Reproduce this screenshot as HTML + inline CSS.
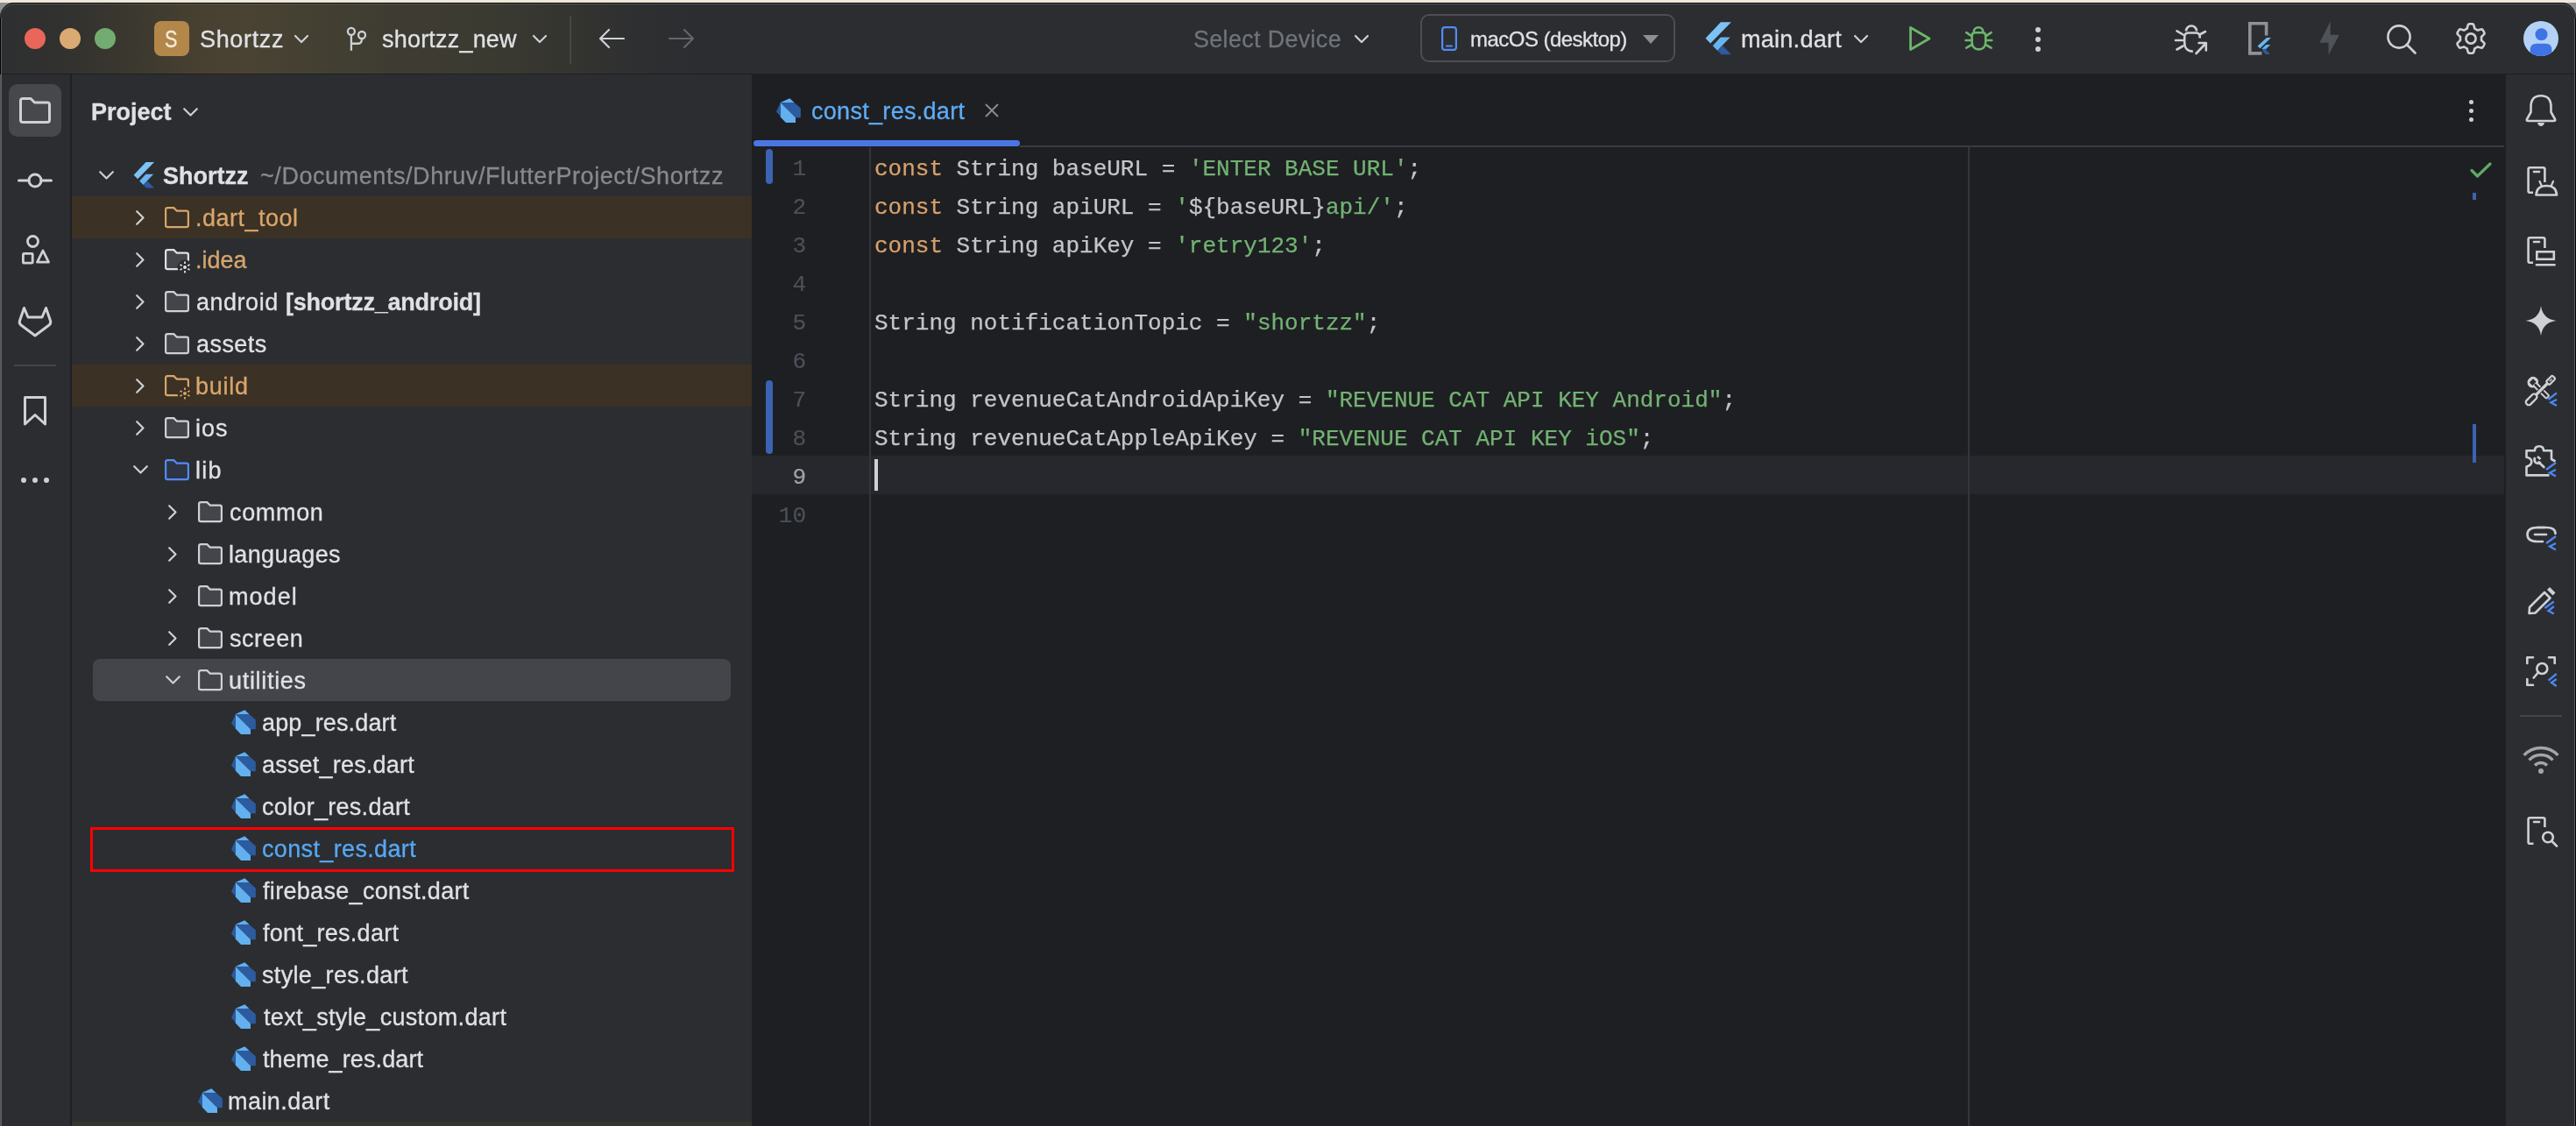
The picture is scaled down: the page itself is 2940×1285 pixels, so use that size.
<!DOCTYPE html>
<html><head><meta charset="utf-8">
<style>
html,body{margin:0;padding:0;}
body{width:2940px;height:1285px;overflow:hidden;background:#2b2d30;position:relative;font-family:"Liberation Sans",sans-serif;}
.a{position:absolute;}
.t{position:absolute;white-space:nowrap;font-size:27px;color:#dfe1e5;line-height:27px;height:27px;-webkit-text-stroke:0.3px currentColor;will-change:transform;}
.b{font-weight:bold;}
.m{position:absolute;white-space:pre;font-family:"Liberation Mono",monospace;font-size:26px;line-height:44px;height:44px;color:#c3c5cb;-webkit-text-stroke:0.25px currentColor;will-change:transform;}
svg{position:absolute;overflow:visible;}
.k{color:#d6a06b}.s{color:#72b273}
.ln{position:absolute;font-family:"Liberation Mono",monospace;font-size:26px;line-height:44px;color:#4b5059;text-align:right;width:80px;-webkit-text-stroke:0.2px currentColor;will-change:transform;}
</style></head><body>
<div class="a" style="left:0px;top:0px;width:2940px;height:3px;background:#efe8d8;"></div>
<div class="a" style="left:0px;top:3px;width:30px;height:30px;background:#8e8f90;"></div>
<div class="a" style="left:2910px;top:3px;width:30px;height:30px;background:#8e8f90;"></div>
<div class="a" style="left:0;top:3px;width:2940px;height:82px;border-radius:17px 17px 0 0;background:linear-gradient(90deg,#2e2f31 0px,#31312f 70px,#3b382f 150px,#474031 220px,#4a4333 280px,#444032 350px,#3e3c32 450px,#3b3a31 560px,#343430 650px,#2e2f31 730px,#2b2d30 800px);box-shadow:inset 0 1px 0 #000, inset 0 2px 0 #5a5b5c"></div>
<div class="a" style="left:0px;top:84px;width:2940px;height:1px;background:#1e1f22;"></div>
<div class="a" style="left:0px;top:20px;width:1px;height:65px;background:#000;"></div>
<div class="a" style="left:1px;top:20px;width:1px;height:65px;background:#5b5e5f;"></div>
<div class="a" style="left:2939px;top:20px;width:1px;height:65px;background:#000;"></div>
<div class="a" style="left:2938px;top:20px;width:1px;height:65px;background:#5b5e5f;"></div>
<div class="a" style="left:28px;top:32px;width:24px;height:24px;border-radius:50%;background:#e9665a"></div>
<div class="a" style="left:68px;top:32px;width:24px;height:24px;border-radius:50%;background:#dbaa72"></div>
<div class="a" style="left:108px;top:32px;width:24px;height:24px;border-radius:50%;background:#73ac70"></div>
<div class="a" style="left:176px;top:24px;width:40px;height:40px;border-radius:8px;background:#b3874a"></div>
<div class="t" style="left:188.2px;top:32.34px;font-size:27px;line-height:27px;height:27px;color:#f6eedf;transform:scaleX(0.8);transform-origin:0 0;">S</div>
<div class="t" style="left:228px;top:32.14px;font-size:27px;line-height:27px;height:27px;color:#dfe1e5;letter-spacing:0.667px;">Shortzz</div>
<svg style="left:336px;top:40px" width="16" height="9" viewBox="0 0 16 9"><path d="M1,1 L8.0,8 L15,1" fill="none" stroke="#ced0d6" stroke-width="2.2" stroke-linecap="round" stroke-linejoin="round"/></svg>
<svg style="left:396px;top:30px" width="24" height="30" viewBox="0 0 24 30"><circle cx="4.9" cy="5.8" r="4" fill="none" stroke="#ced0d6" stroke-width="2.3"/><circle cx="17" cy="10" r="4" fill="none" stroke="#ced0d6" stroke-width="2.3"/><path d="M4.9,9.8 V27.7 M4.9,19.75 H13 Q17,19.75 17,14" fill="none" stroke="#ced0d6" stroke-width="2.3"/></svg>
<div class="t" style="left:436px;top:32.14px;font-size:27px;line-height:27px;height:27px;color:#dfe1e5;letter-spacing:0.2px;">shortzz_new</div>
<svg style="left:608px;top:40px" width="16" height="9" viewBox="0 0 16 9"><path d="M1,1 L8.0,8 L15,1" fill="none" stroke="#ced0d6" stroke-width="2.2" stroke-linecap="round" stroke-linejoin="round"/></svg>
<div class="a" style="left:650px;top:18px;width:2px;height:55px;background:#45474c;"></div>
<svg style="left:683px;top:32px" width="30" height="24" viewBox="0 0 30 24"><path d="M29,12 H2 M12,2 L2,12 L12,22" fill="none" stroke="#ced0d6" stroke-width="2.2" stroke-linecap="round" stroke-linejoin="round"/></svg>
<svg style="left:763px;top:32px" width="30" height="24" viewBox="0 0 30 24"><path d="M1,12 H28 M18,2 L28,12 L18,22" fill="none" stroke="#63666b" stroke-width="2.2" stroke-linecap="round" stroke-linejoin="round"/></svg>
<div class="t" style="left:1362px;top:32.14px;font-size:27px;line-height:27px;height:27px;color:#6f737a;letter-spacing:0.3px;">Select Device</div>
<svg style="left:1546px;top:40px" width="16" height="9" viewBox="0 0 16 9"><path d="M1,1 L8.0,8 L15,1" fill="none" stroke="#ced0d6" stroke-width="2.2" stroke-linecap="round" stroke-linejoin="round"/></svg>
<div class="a" style="left:1620.6px;top:16.2px;width:287.3px;height:51.3px;border:2px solid #4c4e53;border-radius:10px"></div>
<svg style="left:1645px;top:30px" width="18" height="28" viewBox="0 0 18 28"><rect x="1.1" y="1.1" width="15.8" height="25.8" rx="3" fill="none" stroke="#548af7" stroke-width="2.2"/><path d="M6,22.5 H12" stroke="#548af7" stroke-width="2.2" stroke-linecap="round"/></svg>
<div class="t" style="left:1677.7px;top:32.88px;font-size:24px;line-height:24px;height:24px;color:#dfe1e5;letter-spacing:-0.529px;">macOS (desktop)</div>
<svg style="left:1875px;top:40px" width="18" height="10" viewBox="0 0 18 10"><path d="M0,0 H18 L9,10 Z" fill="#8c8f95"/></svg>
<svg style="left:1936.5px;top:18.75px" width="50.0" height="50.0" viewBox="0 0 40 40"><polygon points="21.5,5 31.1,5 12.1,24.3 7.6,19.7" fill="#7dc2f5"/><polygon points="21.3,18.8 30.2,18.8 23,26.2 18.5,30.9 14.2,26.5" fill="#69b3ef"/><polygon points="18.5,30.9 23.2,26.4 31,34.6 22,34.6" fill="#2d5aa0"/></svg>
<div class="t" style="left:1986.8px;top:32.14px;font-size:27px;line-height:27px;height:27px;color:#dfe1e5;letter-spacing:0.275px;">main.dart</div>
<svg style="left:2116px;top:40px" width="16" height="9" viewBox="0 0 16 9"><path d="M1,1 L8.0,8 L15,1" fill="none" stroke="#ced0d6" stroke-width="2.2" stroke-linecap="round" stroke-linejoin="round"/></svg>
<svg style="left:0px;top:0px" width="10" height="10" viewBox="0 0 10 10"><path d="M2180.5,31.5 L2202,44 L2180.5,56.5 Z" fill="none" stroke="#6db66d" stroke-width="2.8" stroke-linejoin="round"/></svg>
<svg style="left:2240px;top:27px" width="40" height="34" viewBox="0 0 40 34"><path d="M12.7,9.5 A5.3,5.3 0 0 1 23.3,9.5" fill="none" stroke="#6db66d" stroke-width="2.6"/><path d="M10.6,14 Q10.6,10.3 14.3,10.3 H22.5 Q26.2,10.3 26.2,14 V21 C26.2,26.8 22.6,29.4 18.4,29.4 C14.2,29.4 10.6,26.8 10.6,21 Z" fill="none" stroke="#6db66d" stroke-width="2.6"/><path d="M4.2,10.2 L9.8,13.8 M3.5,19 H9.5 M4.2,27.6 L9.8,24.4 M32.6,10.2 L27,13.8 M33.3,19 H27.3 M32.6,27.6 L27,24.4" stroke="#6db66d" stroke-width="2.6" stroke-linecap="round"/></svg>
<div class="a" style="left:2323px;top:30.6px;width:6px;height:6px;border-radius:50%;background:#ced0d6"></div>
<div class="a" style="left:2323px;top:41.5px;width:6px;height:6px;border-radius:50%;background:#ced0d6"></div>
<div class="a" style="left:2323px;top:52.5px;width:6px;height:6px;border-radius:50%;background:#ced0d6"></div>
<svg style="left:2482px;top:27px" width="37" height="35" viewBox="0 0 37 35"><path d="M13,8.5 A6,6 0 0 1 25,8.5" fill="none" stroke="#ced0d6" stroke-width="2.6"/><path d="M28.7,16.4 V15 Q28.7,10.5 24,10.5 H16 Q11.2,10.5 11.2,15 V22 C11.2,28 15,31.6 20.8,31.6" fill="none" stroke="#ced0d6" stroke-width="2.6"/><path d="M2.5,8.3 L9.5,12.5 M1,19 H9 M2.5,29.5 L9.5,25.5 M35,9 L28.5,12.5 M24.5,34 L35.5,22.5 M27.5,22 H35.8 V30.5" stroke="#ced0d6" stroke-width="2.6" stroke-linecap="round" stroke-linejoin="round" fill="none"/></svg>
<svg style="left:2566px;top:25px" width="30" height="38" viewBox="0 0 30 38"><path d="M20.6,15.5 V1.8 H1.8 V35.9 H15.4" fill="none" stroke="#8f9195" stroke-width="3.6"/><polygon points="21,18 26,18 13.3,30.2 10.6,27.4" fill="#6cb6f3"/><polygon points="20.3,26 25.2,26 18.6,32.4 15.6,30.5" fill="#62b0ef"/><polygon points="15.8,32.2 18.4,30.2 25.2,37 19.8,37" fill="#2d5aa0"/></svg>
<svg style="left:2647px;top:24px" width="24" height="40" viewBox="0 0 24 40"><path d="M12.7,0.5 L0.3,24.7 H10.5 L10.6,38.8 L22.8,15.7 H12.7 Z" fill="#4f5256"/></svg>
<svg style="left:2724px;top:28px" width="36" height="36" viewBox="0 0 36 36"><circle cx="14" cy="14" r="12.6" fill="none" stroke="#ced0d6" stroke-width="2.6"/><path d="M23,23 L32.5,32.5" stroke="#ced0d6" stroke-width="2.8" stroke-linecap="round"/></svg>
<svg style="left:2802px;top:26.200000000000003px" width="36" height="36" viewBox="0 0 36 36"><path d="M30.10,18.00 L30.09,18.42 L30.07,18.84 L30.03,19.26 L29.98,19.68 L30.14,20.14 L30.83,20.73 L31.55,21.38 L32.26,22.09 L32.91,22.85 L33.48,23.63 L33.48,24.26 L33.26,24.79 L33.01,25.32 L32.75,25.84 L32.46,26.35 L32.16,26.85 L31.84,27.34 L31.51,27.82 L31.16,28.28 L30.62,28.59 L29.65,28.49 L28.67,28.30 L27.70,28.05 L26.78,27.75 L25.93,27.45 L25.45,27.53 L25.11,27.79 L24.77,28.03 L24.41,28.26 L24.05,28.48 L23.68,28.68 L23.30,28.88 L22.92,29.05 L22.53,29.22 L22.22,29.59 L22.05,30.48 L21.85,31.43 L21.59,32.39 L21.26,33.34 L20.86,34.22 L20.32,34.54 L19.75,34.61 L19.16,34.66 L18.58,34.69 L18.00,34.70 L17.42,34.69 L16.84,34.66 L16.25,34.61 L15.68,34.54 L15.14,34.22 L14.74,33.34 L14.41,32.39 L14.15,31.43 L13.95,30.48 L13.78,29.59 L13.47,29.22 L13.08,29.05 L12.70,28.88 L12.32,28.68 L11.95,28.48 L11.59,28.26 L11.23,28.03 L10.89,27.79 L10.55,27.53 L10.07,27.45 L9.22,27.75 L8.30,28.05 L7.33,28.30 L6.35,28.49 L5.38,28.59 L4.84,28.28 L4.49,27.82 L4.16,27.34 L3.84,26.85 L3.54,26.35 L3.25,25.84 L2.99,25.32 L2.74,24.79 L2.52,24.26 L2.52,23.63 L3.09,22.85 L3.74,22.09 L4.45,21.38 L5.17,20.73 L5.86,20.14 L6.02,19.68 L5.97,19.26 L5.93,18.84 L5.91,18.42 L5.90,18.00 L5.91,17.58 L5.93,17.16 L5.97,16.74 L6.02,16.32 L5.86,15.86 L5.17,15.27 L4.45,14.62 L3.74,13.91 L3.09,13.15 L2.52,12.37 L2.52,11.74 L2.74,11.21 L2.99,10.68 L3.25,10.16 L3.54,9.65 L3.84,9.15 L4.16,8.66 L4.49,8.18 L4.84,7.72 L5.38,7.41 L6.35,7.51 L7.33,7.70 L8.30,7.95 L9.22,8.25 L10.07,8.55 L10.55,8.47 L10.89,8.21 L11.23,7.97 L11.59,7.74 L11.95,7.52 L12.32,7.32 L12.70,7.12 L13.08,6.95 L13.47,6.78 L13.78,6.41 L13.95,5.52 L14.15,4.57 L14.41,3.61 L14.74,2.66 L15.14,1.78 L15.68,1.46 L16.25,1.39 L16.84,1.34 L17.42,1.31 L18.00,1.30 L18.58,1.31 L19.16,1.34 L19.75,1.39 L20.32,1.46 L20.86,1.78 L21.26,2.66 L21.59,3.61 L21.85,4.57 L22.05,5.52 L22.22,6.41 L22.53,6.78 L22.92,6.95 L23.30,7.12 L23.68,7.32 L24.05,7.52 L24.41,7.74 L24.77,7.97 L25.11,8.21 L25.45,8.47 L25.93,8.55 L26.78,8.25 L27.70,7.95 L28.67,7.70 L29.65,7.51 L30.62,7.41 L31.16,7.72 L31.51,8.18 L31.84,8.66 L32.16,9.15 L32.46,9.65 L32.75,10.16 L33.01,10.68 L33.26,11.21 L33.48,11.74 L33.48,12.37 L32.91,13.15 L32.26,13.91 L31.55,14.62 L30.83,15.27 L30.14,15.86 L29.98,16.32 L30.03,16.74 L30.07,17.16 L30.09,17.58Z" fill="none" stroke="#ced0d6" stroke-width="2.6" stroke-linejoin="round"/><circle cx="18" cy="18" r="5.6" fill="none" stroke="#ced0d6" stroke-width="2.6"/></svg>
<svg style="left:2880px;top:24px" width="40" height="40" viewBox="0 0 40 40"><defs><clipPath id="avc"><circle cx="20" cy="20" r="20"/></clipPath></defs><circle cx="20" cy="20" r="20" fill="#b4d2f6"/><circle cx="20.5" cy="15.3" r="7" fill="#3f74e4"/><path d="M7.7,40 V33 Q7.7,25.8 15,25.8 H25.5 Q32.4,25.8 32.4,33 V40 Z" fill="#3f74e4" clip-path="url(#avc)"/></svg>
<div class="a" style="left:0px;top:85px;width:80px;height:1200px;background:#2b2d30;"></div>
<div class="a" style="left:0px;top:85px;width:1px;height:1200px;background:#515455;"></div>
<div class="a" style="left:1px;top:85px;width:1px;height:1200px;background:#5f6263;"></div>
<div class="a" style="left:80px;top:85px;width:2px;height:1200px;background:#1e1f22;"></div>
<div class="a" style="left:10px;top:96px;width:60px;height:60px;border-radius:10px;background:#46484c"></div>
<svg style="left:22px;top:111px" width="36" height="30" viewBox="0 0 36 30"><path d="M1.5,4 Q1.5,1.5 4,1.5 H13 L17.5,6 H32 Q34.5,6 34.5,8.5 V26 Q34.5,28.5 32,28.5 H4 Q1.5,28.5 1.5,26 Z" fill="none" stroke="#ced0d6" stroke-width="3" stroke-linejoin="round"/></svg>
<svg style="left:20px;top:196px" width="40" height="20" viewBox="0 0 40 20"><circle cx="20" cy="10" r="7" fill="none" stroke="#ced0d6" stroke-width="3"/><path d="M1.5,10 H13 M27,10 H38.5" stroke="#ced0d6" stroke-width="3" stroke-linecap="round"/></svg>
<svg style="left:24px;top:267px" width="34" height="36" viewBox="0 0 34 36"><circle cx="13.5" cy="8.5" r="6" fill="none" stroke="#ced0d6" stroke-width="2.8"/><rect x="2.4" y="22.4" width="10.8" height="10.8" rx="1" fill="none" stroke="#ced0d6" stroke-width="2.8"/><path d="M25,19 L31.5,32.2 H18.5 Z" fill="none" stroke="#ced0d6" stroke-width="2.8" stroke-linejoin="round"/></svg>
<svg style="left:20px;top:349px" width="40" height="36" viewBox="0 0 40 36"><path d="M7.5,2.5 L12,13 H28 L32.5,2.5 L37.5,17 Q38.5,20 36,22 L20,34 L4,22 Q1.5,20 2.5,17 Z" fill="none" stroke="#ced0d6" stroke-width="3" stroke-linejoin="round"/></svg>
<div class="a" style="left:16px;top:416px;width:48px;height:2px;background:#43454a;"></div>
<svg style="left:26px;top:451px" width="28" height="36" viewBox="0 0 28 36"><path d="M2.5,2.5 H25.5 V33 L14,22.5 L2.5,33 Z" fill="none" stroke="#ced0d6" stroke-width="3" stroke-linejoin="round"/></svg>
<div class="a" style="left:23.8px;top:544.8px;width:6.4px;height:6.4px;border-radius:50%;background:#ced0d6"></div>
<div class="a" style="left:36.8px;top:544.8px;width:6.4px;height:6.4px;border-radius:50%;background:#ced0d6"></div>
<div class="a" style="left:49.8px;top:544.8px;width:6.4px;height:6.4px;border-radius:50%;background:#ced0d6"></div>
<div class="a" style="left:82px;top:85px;width:776px;height:1200px;background:#2b2d30;"></div>
<div class="t" style="left:104px;top:115.14px;font-size:27px;line-height:27px;height:27px;color:#dfe1e5;font-weight:bold;letter-spacing:0.0px;">Project</div>
<svg style="left:209px;top:123px" width="17" height="10" viewBox="0 0 17 10"><path d="M1.2,1.2 L8.5,8.5 L15.8,1.2" fill="none" stroke="#ced0d6" stroke-width="2.2" stroke-linecap="round" stroke-linejoin="round"/></svg>
<svg style="left:113px;top:195px" width="17" height="10" viewBox="0 0 17 10"><path d="M1.2,1.2 L8.5,8.5 L15.8,1.2" fill="none" stroke="#ced0d6" stroke-width="2.2" stroke-linecap="round" stroke-linejoin="round"/></svg>
<svg style="left:145px;top:180px" width="40.0" height="40.0" viewBox="0 0 40 40"><polygon points="21.5,5 31.1,5 12.1,24.3 7.6,19.7" fill="#7dc2f5"/><polygon points="21.3,18.8 30.2,18.8 23,26.2 18.5,30.9 14.2,26.5" fill="#69b3ef"/><polygon points="18.5,30.9 23.2,26.4 31,34.6 22,34.6" fill="#2d5aa0"/></svg>
<div class="t" style="left:186px;top:188.14px;font-size:27px;line-height:27px;height:27px;color:#dfe1e5;font-weight:bold;letter-spacing:0.0px;">Shortzz</div>
<div class="t" style="left:297px;top:188.14px;font-size:27px;line-height:27px;height:27px;color:#86898f;letter-spacing:0.564px;">~/Documents/Dhruv/FlutterProject/Shortzz</div>
<div class="a" style="left:82px;top:224px;width:776px;height:48px;background:#3b3124;"></div>
<div class="a" style="left:82px;top:416px;width:776px;height:48px;background:#3b3124;"></div>
<div class="a" style="left:106px;top:752px;width:728px;height:48px;background:#43454a;border-radius:8px;"></div>
<svg style="left:155px;top:240px" width="10" height="17" viewBox="0 0 10 17"><path d="M1.2,1.2 L8.5,8.5 L1.2,15.8" fill="none" stroke="#ced0d6" stroke-width="2.2" stroke-linecap="round" stroke-linejoin="round"/></svg>
<svg style="left:188px;top:236px" width="28" height="25" viewBox="0 0 28 25"><path d="M1.1,3.2 Q1.1,1.1 3.2,1.1 H10.3 L13.9,4.7 H24.8 Q26.9,4.7 26.9,6.8 V21 Q26.9,23.1 24.8,23.1 H3.2 Q1.1,23.1 1.1,21 Z" fill="#3b3124" stroke="#d8a56c" stroke-width="2.2" stroke-linejoin="round"/></svg>
<div class="t" style="left:223px;top:236.14px;font-size:27px;line-height:27px;height:27px;color:#d8a56c;letter-spacing:0.5px;">.dart_tool</div>
<svg style="left:155px;top:288px" width="10" height="17" viewBox="0 0 10 17"><path d="M1.2,1.2 L8.5,8.5 L1.2,15.8" fill="none" stroke="#ced0d6" stroke-width="2.2" stroke-linecap="round" stroke-linejoin="round"/></svg>
<svg style="left:188px;top:284px" width="28" height="25" viewBox="0 0 28 25"><path d="M1.1,3.2 Q1.1,1.1 3.2,1.1 H10.3 L13.9,4.7 H24.8 Q26.9,4.7 26.9,6.8 V21 Q26.9,23.1 24.8,23.1 H3.2 Q1.1,23.1 1.1,21 Z" fill="#43454a" stroke="#dfe1e5" stroke-width="2.2" stroke-linejoin="round"/><circle cx="23" cy="21" r="8.5" fill="#2b2d30"/><circle cx="23" cy="21" r="2" fill="#dfe1e5"/><path d="M23,14.5 V17 M23,25 V27.5 M17.5,18 L19.7,19.2 M26.3,22.8 L28.5,24 M17.5,24 L19.7,22.8 M26.3,19.2 L28.5,18" stroke="#dfe1e5" stroke-width="1.8" stroke-linecap="butt"/></svg>
<div class="t" style="left:223.2px;top:284.14px;font-size:27px;line-height:27px;height:27px;color:#d8a56c;letter-spacing:-0.025px;">.idea</div>
<svg style="left:155px;top:336px" width="10" height="17" viewBox="0 0 10 17"><path d="M1.2,1.2 L8.5,8.5 L1.2,15.8" fill="none" stroke="#ced0d6" stroke-width="2.2" stroke-linecap="round" stroke-linejoin="round"/></svg>
<svg style="left:188px;top:332px" width="28" height="25" viewBox="0 0 28 25"><path d="M1.1,3.2 Q1.1,1.1 3.2,1.1 H10.3 L13.9,4.7 H24.8 Q26.9,4.7 26.9,6.8 V21 Q26.9,23.1 24.8,23.1 H3.2 Q1.1,23.1 1.1,21 Z" fill="#43454a" stroke="#ced0d6" stroke-width="2.2" stroke-linejoin="round"/></svg>
<div class="t" style="left:223.6px;top:332.14px;font-size:27px;line-height:27px;height:27px;color:#dfe1e5;letter-spacing:0.517px;">android</div>
<div class="t" style="left:325.9px;top:332.14px;font-size:27px;line-height:27px;height:27px;color:#dfe1e5;font-weight:bold;letter-spacing:-0.219px;">[shortzz_android]</div>
<svg style="left:155px;top:384px" width="10" height="17" viewBox="0 0 10 17"><path d="M1.2,1.2 L8.5,8.5 L1.2,15.8" fill="none" stroke="#ced0d6" stroke-width="2.2" stroke-linecap="round" stroke-linejoin="round"/></svg>
<svg style="left:188px;top:380px" width="28" height="25" viewBox="0 0 28 25"><path d="M1.1,3.2 Q1.1,1.1 3.2,1.1 H10.3 L13.9,4.7 H24.8 Q26.9,4.7 26.9,6.8 V21 Q26.9,23.1 24.8,23.1 H3.2 Q1.1,23.1 1.1,21 Z" fill="#43454a" stroke="#ced0d6" stroke-width="2.2" stroke-linejoin="round"/></svg>
<div class="t" style="left:223.6px;top:380.14px;font-size:27px;line-height:27px;height:27px;color:#dfe1e5;letter-spacing:0.44px;">assets</div>
<svg style="left:155px;top:432px" width="10" height="17" viewBox="0 0 10 17"><path d="M1.2,1.2 L8.5,8.5 L1.2,15.8" fill="none" stroke="#ced0d6" stroke-width="2.2" stroke-linecap="round" stroke-linejoin="round"/></svg>
<svg style="left:188px;top:428px" width="28" height="25" viewBox="0 0 28 25"><path d="M1.1,3.2 Q1.1,1.1 3.2,1.1 H10.3 L13.9,4.7 H24.8 Q26.9,4.7 26.9,6.8 V21 Q26.9,23.1 24.8,23.1 H3.2 Q1.1,23.1 1.1,21 Z" fill="#3b3124" stroke="#d8a56c" stroke-width="2.2" stroke-linejoin="round"/><circle cx="23" cy="21" r="8.5" fill="#3b3124"/><circle cx="23" cy="21" r="2" fill="#d8a56c"/><path d="M23,14.5 V17 M23,25 V27.5 M17.5,18 L19.7,19.2 M26.3,22.8 L28.5,24 M17.5,24 L19.7,22.8 M26.3,19.2 L28.5,18" stroke="#d8a56c" stroke-width="1.8" stroke-linecap="butt"/></svg>
<div class="t" style="left:223.2px;top:428.14px;font-size:27px;line-height:27px;height:27px;color:#d8a56c;letter-spacing:0.725px;">build</div>
<svg style="left:155px;top:480px" width="10" height="17" viewBox="0 0 10 17"><path d="M1.2,1.2 L8.5,8.5 L1.2,15.8" fill="none" stroke="#ced0d6" stroke-width="2.2" stroke-linecap="round" stroke-linejoin="round"/></svg>
<svg style="left:188px;top:476px" width="28" height="25" viewBox="0 0 28 25"><path d="M1.1,3.2 Q1.1,1.1 3.2,1.1 H10.3 L13.9,4.7 H24.8 Q26.9,4.7 26.9,6.8 V21 Q26.9,23.1 24.8,23.1 H3.2 Q1.1,23.1 1.1,21 Z" fill="#43454a" stroke="#ced0d6" stroke-width="2.2" stroke-linejoin="round"/></svg>
<div class="t" style="left:222.6px;top:476.14px;font-size:27px;line-height:27px;height:27px;color:#dfe1e5;letter-spacing:1.05px;">ios</div>
<svg style="left:151.5px;top:531px" width="17" height="10" viewBox="0 0 17 10"><path d="M1.2,1.2 L8.5,8.5 L15.8,1.2" fill="none" stroke="#ced0d6" stroke-width="2.2" stroke-linecap="round" stroke-linejoin="round"/></svg>
<svg style="left:188px;top:524px" width="28" height="25" viewBox="0 0 28 25"><path d="M1.1,3.2 Q1.1,1.1 3.2,1.1 H10.3 L13.9,4.7 H24.8 Q26.9,4.7 26.9,6.8 V21 Q26.9,23.1 24.8,23.1 H3.2 Q1.1,23.1 1.1,21 Z" fill="#2e3444" stroke="#548af7" stroke-width="2.2" stroke-linejoin="round"/></svg>
<div class="t" style="left:223.1px;top:524.14px;font-size:27px;line-height:27px;height:27px;color:#dfe1e5;letter-spacing:1.2px;">lib</div>
<svg style="left:192px;top:576px" width="10" height="17" viewBox="0 0 10 17"><path d="M1.2,1.2 L8.5,8.5 L1.2,15.8" fill="none" stroke="#ced0d6" stroke-width="2.2" stroke-linecap="round" stroke-linejoin="round"/></svg>
<svg style="left:226px;top:572px" width="28" height="25" viewBox="0 0 28 25"><path d="M1.1,3.2 Q1.1,1.1 3.2,1.1 H10.3 L13.9,4.7 H24.8 Q26.9,4.7 26.9,6.8 V21 Q26.9,23.1 24.8,23.1 H3.2 Q1.1,23.1 1.1,21 Z" fill="#43454a" stroke="#ced0d6" stroke-width="2.2" stroke-linejoin="round"/></svg>
<div class="t" style="left:261.7px;top:572.14px;font-size:27px;line-height:27px;height:27px;color:#dfe1e5;letter-spacing:0.66px;">common</div>
<svg style="left:192px;top:624px" width="10" height="17" viewBox="0 0 10 17"><path d="M1.2,1.2 L8.5,8.5 L1.2,15.8" fill="none" stroke="#ced0d6" stroke-width="2.2" stroke-linecap="round" stroke-linejoin="round"/></svg>
<svg style="left:226px;top:620px" width="28" height="25" viewBox="0 0 28 25"><path d="M1.1,3.2 Q1.1,1.1 3.2,1.1 H10.3 L13.9,4.7 H24.8 Q26.9,4.7 26.9,6.8 V21 Q26.9,23.1 24.8,23.1 H3.2 Q1.1,23.1 1.1,21 Z" fill="#43454a" stroke="#ced0d6" stroke-width="2.2" stroke-linejoin="round"/></svg>
<div class="t" style="left:260.7px;top:620.14px;font-size:27px;line-height:27px;height:27px;color:#dfe1e5;letter-spacing:0.363px;">languages</div>
<svg style="left:192px;top:672px" width="10" height="17" viewBox="0 0 10 17"><path d="M1.2,1.2 L8.5,8.5 L1.2,15.8" fill="none" stroke="#ced0d6" stroke-width="2.2" stroke-linecap="round" stroke-linejoin="round"/></svg>
<svg style="left:226px;top:668px" width="28" height="25" viewBox="0 0 28 25"><path d="M1.1,3.2 Q1.1,1.1 3.2,1.1 H10.3 L13.9,4.7 H24.8 Q26.9,4.7 26.9,6.8 V21 Q26.9,23.1 24.8,23.1 H3.2 Q1.1,23.1 1.1,21 Z" fill="#43454a" stroke="#ced0d6" stroke-width="2.2" stroke-linejoin="round"/></svg>
<div class="t" style="left:260.7px;top:668.14px;font-size:27px;line-height:27px;height:27px;color:#dfe1e5;letter-spacing:1.05px;">model</div>
<svg style="left:192px;top:720px" width="10" height="17" viewBox="0 0 10 17"><path d="M1.2,1.2 L8.5,8.5 L1.2,15.8" fill="none" stroke="#ced0d6" stroke-width="2.2" stroke-linecap="round" stroke-linejoin="round"/></svg>
<svg style="left:226px;top:716px" width="28" height="25" viewBox="0 0 28 25"><path d="M1.1,3.2 Q1.1,1.1 3.2,1.1 H10.3 L13.9,4.7 H24.8 Q26.9,4.7 26.9,6.8 V21 Q26.9,23.1 24.8,23.1 H3.2 Q1.1,23.1 1.1,21 Z" fill="#43454a" stroke="#ced0d6" stroke-width="2.2" stroke-linejoin="round"/></svg>
<div class="t" style="left:261.7px;top:716.14px;font-size:27px;line-height:27px;height:27px;color:#dfe1e5;letter-spacing:0.54px;">screen</div>
<svg style="left:188.5px;top:771px" width="17" height="10" viewBox="0 0 17 10"><path d="M1.2,1.2 L8.5,8.5 L15.8,1.2" fill="none" stroke="#ced0d6" stroke-width="2.2" stroke-linecap="round" stroke-linejoin="round"/></svg>
<svg style="left:226px;top:764px" width="28" height="25" viewBox="0 0 28 25"><path d="M1.1,3.2 Q1.1,1.1 3.2,1.1 H10.3 L13.9,4.7 H24.8 Q26.9,4.7 26.9,6.8 V21 Q26.9,23.1 24.8,23.1 H3.2 Q1.1,23.1 1.1,21 Z" fill="#43454a" stroke="#ced0d6" stroke-width="2.2" stroke-linejoin="round"/></svg>
<div class="t" style="left:260.7px;top:764.14px;font-size:27px;line-height:27px;height:27px;color:#dfe1e5;letter-spacing:0.688px;">utilities</div>
<svg style="left:264px;top:810px" width="28" height="28" viewBox="0 0 28 28"><polygon points="15.3,0.3 4.7,4.9 20.4,4.9" fill="#62b0ef"/><polygon points="4.7,4.9 20.4,4.9 27.9,11.6 27.9,22.3 22,22.3" fill="#2c5b9f"/><polygon points="4.7,4.9 22,22.3 22,28.1 11,28.1 4.7,21.5" fill="#62b0ef"/><polygon points="4.7,4.9 0,15.4 4.9,21" fill="#2c5b9f"/></svg>
<div class="t" style="left:299.2px;top:812.14px;font-size:27px;line-height:27px;height:27px;color:#dfe1e5;letter-spacing:0.145px;">app_res.dart</div>
<svg style="left:264px;top:858px" width="28" height="28" viewBox="0 0 28 28"><polygon points="15.3,0.3 4.7,4.9 20.4,4.9" fill="#62b0ef"/><polygon points="4.7,4.9 20.4,4.9 27.9,11.6 27.9,22.3 22,22.3" fill="#2c5b9f"/><polygon points="4.7,4.9 22,22.3 22,28.1 11,28.1 4.7,21.5" fill="#62b0ef"/><polygon points="4.7,4.9 0,15.4 4.9,21" fill="#2c5b9f"/></svg>
<div class="t" style="left:299.2px;top:860.14px;font-size:27px;line-height:27px;height:27px;color:#dfe1e5;letter-spacing:0.2px;">asset_res.dart</div>
<svg style="left:264px;top:906px" width="28" height="28" viewBox="0 0 28 28"><polygon points="15.3,0.3 4.7,4.9 20.4,4.9" fill="#62b0ef"/><polygon points="4.7,4.9 20.4,4.9 27.9,11.6 27.9,22.3 22,22.3" fill="#2c5b9f"/><polygon points="4.7,4.9 22,22.3 22,28.1 11,28.1 4.7,21.5" fill="#62b0ef"/><polygon points="4.7,4.9 0,15.4 4.9,21" fill="#2c5b9f"/></svg>
<div class="t" style="left:299.4px;top:908.14px;font-size:27px;line-height:27px;height:27px;color:#dfe1e5;letter-spacing:0.285px;">color_res.dart</div>
<svg style="left:264px;top:954px" width="28" height="28" viewBox="0 0 28 28"><polygon points="15.3,0.3 4.7,4.9 20.4,4.9" fill="#62b0ef"/><polygon points="4.7,4.9 20.4,4.9 27.9,11.6 27.9,22.3 22,22.3" fill="#2c5b9f"/><polygon points="4.7,4.9 22,22.3 22,28.1 11,28.1 4.7,21.5" fill="#62b0ef"/><polygon points="4.7,4.9 0,15.4 4.9,21" fill="#2c5b9f"/></svg>
<div class="t" style="left:299.2px;top:956.14px;font-size:27px;line-height:27px;height:27px;color:#56a8f5;letter-spacing:0.354px;">const_res.dart</div>
<svg style="left:264px;top:1002px" width="28" height="28" viewBox="0 0 28 28"><polygon points="15.3,0.3 4.7,4.9 20.4,4.9" fill="#62b0ef"/><polygon points="4.7,4.9 20.4,4.9 27.9,11.6 27.9,22.3 22,22.3" fill="#2c5b9f"/><polygon points="4.7,4.9 22,22.3 22,28.1 11,28.1 4.7,21.5" fill="#62b0ef"/><polygon points="4.7,4.9 0,15.4 4.9,21" fill="#2c5b9f"/></svg>
<div class="t" style="left:300.2px;top:1004.14px;font-size:27px;line-height:27px;height:27px;color:#dfe1e5;letter-spacing:0.317px;">firebase_const.dart</div>
<svg style="left:264px;top:1050px" width="28" height="28" viewBox="0 0 28 28"><polygon points="15.3,0.3 4.7,4.9 20.4,4.9" fill="#62b0ef"/><polygon points="4.7,4.9 20.4,4.9 27.9,11.6 27.9,22.3 22,22.3" fill="#2c5b9f"/><polygon points="4.7,4.9 22,22.3 22,28.1 11,28.1 4.7,21.5" fill="#62b0ef"/><polygon points="4.7,4.9 0,15.4 4.9,21" fill="#2c5b9f"/></svg>
<div class="t" style="left:300.2px;top:1052.14px;font-size:27px;line-height:27px;height:27px;color:#dfe1e5;letter-spacing:0.283px;">font_res.dart</div>
<svg style="left:264px;top:1098px" width="28" height="28" viewBox="0 0 28 28"><polygon points="15.3,0.3 4.7,4.9 20.4,4.9" fill="#62b0ef"/><polygon points="4.7,4.9 20.4,4.9 27.9,11.6 27.9,22.3 22,22.3" fill="#2c5b9f"/><polygon points="4.7,4.9 22,22.3 22,28.1 11,28.1 4.7,21.5" fill="#62b0ef"/><polygon points="4.7,4.9 0,15.4 4.9,21" fill="#2c5b9f"/></svg>
<div class="t" style="left:299.2px;top:1100.14px;font-size:27px;line-height:27px;height:27px;color:#dfe1e5;letter-spacing:0.338px;">style_res.dart</div>
<svg style="left:264px;top:1146px" width="28" height="28" viewBox="0 0 28 28"><polygon points="15.3,0.3 4.7,4.9 20.4,4.9" fill="#62b0ef"/><polygon points="4.7,4.9 20.4,4.9 27.9,11.6 27.9,22.3 22,22.3" fill="#2c5b9f"/><polygon points="4.7,4.9 22,22.3 22,28.1 11,28.1 4.7,21.5" fill="#62b0ef"/><polygon points="4.7,4.9 0,15.4 4.9,21" fill="#2c5b9f"/></svg>
<div class="t" style="left:300.5px;top:1148.14px;font-size:27px;line-height:27px;height:27px;color:#dfe1e5;letter-spacing:0.324px;">text_style_custom.dart</div>
<svg style="left:264px;top:1194px" width="28" height="28" viewBox="0 0 28 28"><polygon points="15.3,0.3 4.7,4.9 20.4,4.9" fill="#62b0ef"/><polygon points="4.7,4.9 20.4,4.9 27.9,11.6 27.9,22.3 22,22.3" fill="#2c5b9f"/><polygon points="4.7,4.9 22,22.3 22,28.1 11,28.1 4.7,21.5" fill="#62b0ef"/><polygon points="4.7,4.9 0,15.4 4.9,21" fill="#2c5b9f"/></svg>
<div class="t" style="left:300.2px;top:1196.14px;font-size:27px;line-height:27px;height:27px;color:#dfe1e5;letter-spacing:0.108px;">theme_res.dart</div>
<svg style="left:226px;top:1242px" width="28" height="28" viewBox="0 0 28 28"><polygon points="15.3,0.3 4.7,4.9 20.4,4.9" fill="#62b0ef"/><polygon points="4.7,4.9 20.4,4.9 27.9,11.6 27.9,22.3 22,22.3" fill="#2c5b9f"/><polygon points="4.7,4.9 22,22.3 22,28.1 11,28.1 4.7,21.5" fill="#62b0ef"/><polygon points="4.7,4.9 0,15.4 4.9,21" fill="#2c5b9f"/></svg>
<div class="t" style="left:260.4px;top:1244.14px;font-size:27px;line-height:27px;height:27px;color:#dfe1e5;letter-spacing:0.45px;">main.dart</div>
<div class="a" style="left:82px;top:1280px;width:776px;height:48px;background:#35352f;"></div>
<div class="a" style="left:103px;top:944px;width:729px;height:45px;border:3px solid #ff0000"></div>
<div class="a" style="left:858px;top:85px;width:2002px;height:1200px;background:#1e1f22;"></div>
<svg style="left:886px;top:112px" width="28" height="28" viewBox="0 0 28 28"><polygon points="15.3,0.3 4.7,4.9 20.4,4.9" fill="#62b0ef"/><polygon points="4.7,4.9 20.4,4.9 27.9,11.6 27.9,22.3 22,22.3" fill="#2c5b9f"/><polygon points="4.7,4.9 22,22.3 22,28.1 11,28.1 4.7,21.5" fill="#62b0ef"/><polygon points="4.7,4.9 0,15.4 4.9,21" fill="#2c5b9f"/></svg>
<div class="t" style="left:925.9px;top:113.64px;font-size:27px;line-height:27px;height:27px;color:#5eacf5;letter-spacing:0.3px;">const_res.dart</div>
<svg style="left:1124px;top:118px" width="16" height="16" viewBox="0 0 16 16"><path d="M1.5,1.5 L14.5,14.5 M14.5,1.5 L1.5,14.5" stroke="#868a91" stroke-width="2" stroke-linecap="round"/></svg>
<div class="a" style="left:1164px;top:166px;width:1694px;height:2px;background:#393b40;"></div>
<div class="a" style="left:860px;top:160px;width:304px;height:7px;background:#4a76e4;border-radius:4px;"></div>
<div class="a" style="left:2817.5px;top:113.5px;width:5px;height:5px;border-radius:50%;background:#ced0d6"></div>
<div class="a" style="left:2817.5px;top:123.5px;width:5px;height:5px;border-radius:50%;background:#ced0d6"></div>
<div class="a" style="left:2817.5px;top:133.5px;width:5px;height:5px;border-radius:50%;background:#ced0d6"></div>
<div class="a" style="left:858px;top:520px;width:2000px;height:44px;background:#26282e;"></div>
<div class="a" style="left:992px;top:168px;width:2px;height:1117px;background:#343538;"></div>
<div class="a" style="left:2246px;top:168px;width:2px;height:1117px;background:#34363b;"></div>
<div class="a" style="left:874px;top:170px;width:8px;height:40px;background:#3a63b3;border-radius:4px;"></div>
<div class="a" style="left:874px;top:434px;width:8px;height:84px;background:#3a63b3;border-radius:4px;"></div>
<div class="ln" style="left:720px;width:200px;top:171px;color:#4b5059">1</div>
<div class="ln" style="left:720px;width:200px;top:215px;color:#4b5059">2</div>
<div class="ln" style="left:720px;width:200px;top:259px;color:#4b5059">3</div>
<div class="ln" style="left:720px;width:200px;top:303px;color:#4b5059">4</div>
<div class="ln" style="left:720px;width:200px;top:347px;color:#4b5059">5</div>
<div class="ln" style="left:720px;width:200px;top:391px;color:#4b5059">6</div>
<div class="ln" style="left:720px;width:200px;top:435px;color:#4b5059">7</div>
<div class="ln" style="left:720px;width:200px;top:479px;color:#4b5059">8</div>
<div class="ln" style="left:720px;width:200px;top:523px;color:#a1a3ab">9</div>
<div class="ln" style="left:720px;width:200px;top:567px;color:#4b5059">10</div>
<div class="m" style="left:998.3px;top:171px"><span class="k">const</span> String baseURL = <span class="s">'ENTER BASE URL'</span>;</div>
<div class="m" style="left:998.3px;top:215px"><span class="k">const</span> String apiURL = <span class="s">'</span>${baseURL}<span class="s">api/'</span>;</div>
<div class="m" style="left:998.3px;top:259px"><span class="k">const</span> String apiKey = <span class="s">'retry123'</span>;</div>
<div class="m" style="left:998.3px;top:347px">String notificationTopic = <span class="s">"shortzz"</span>;</div>
<div class="m" style="left:998.3px;top:435px">String revenueCatAndroidApiKey = <span class="s">"REVENUE CAT API KEY Android"</span>;</div>
<div class="m" style="left:998.3px;top:479px">String revenueCatAppleApiKey = <span class="s">"REVENUE CAT API KEY iOS"</span>;</div>
<div class="a" style="left:998px;top:524px;width:4px;height:36px;background:#ced0d6;"></div>
<svg style="left:2819px;top:185px" width="25" height="19" viewBox="0 0 25 19"><path d="M2,9.5 L8.5,16 L23,2" fill="none" stroke="#62a867" stroke-width="3.2" stroke-linecap="round" stroke-linejoin="round"/></svg>
<div class="a" style="left:2822px;top:220px;width:4px;height:8px;background:#3a63b3;"></div>
<div class="a" style="left:2822px;top:484px;width:4px;height:44px;background:#3a63b3;"></div>
<div class="a" style="left:2858px;top:85px;width:2px;height:1200px;background:#1e1f22;"></div>
<div class="a" style="left:2860px;top:85px;width:78px;height:1200px;background:#2b2d30;"></div>
<div class="a" style="left:2938px;top:85px;width:1px;height:1200px;background:#5b5e5f;"></div>
<div class="a" style="left:2939px;top:85px;width:1px;height:1200px;background:#000000;"></div>
<div class="a" style="left:2876px;top:816px;width:48px;height:2px;background:#43454a;"></div>
<svg style="left:0;top:85px" width="2940" height="1200" viewBox="0 0 2940 1200"><path d="M2888.5,37 Q2888.5,24.3 2900,24.3 Q2911.5,24.3 2911.5,37 V43 L2916,51 Q2917,53 2914.5,53 H2885.5 Q2883,53 2884,51 L2888.5,43 Z" fill="none" stroke="#ced0d6" stroke-width="2.6" stroke-linejoin="round"/><path d="M2896,55 H2904 Q2903,59 2900,59 Q2897,59 2896,55Z" fill="#ced0d6"/><path d="M2891,134.7 H2887 Q2885.6,134.7 2885.6,133 V108 Q2885.6,106.3 2887.5,106.3 H2902.5 Q2904.4,106.3 2904.4,108 V123" fill="none" stroke="#ced0d6" stroke-width="2.6"/><path d="M2892,111 H2898" stroke="#ced0d6" stroke-width="2.6" stroke-linecap="round"/><path d="M2894.5,137.5 Q2895,127 2906.3,127 Q2917.5,127 2918,137.5 Z" fill="none" stroke="#ced0d6" stroke-width="2.6" stroke-linejoin="round"/><path d="M2898.5,122 L2901,127.5 M2914,122 L2911.5,127.5" stroke="#ced0d6" stroke-width="2.2" stroke-linecap="round"/><path d="M2891,214.7 H2887 Q2885.6,214.7 2885.6,213 V188 Q2885.6,186.3 2887.5,186.3 H2902.5 Q2904.4,186.3 2904.4,188 V198" fill="none" stroke="#ced0d6" stroke-width="2.6"/><path d="M2892,191 H2898" stroke="#ced0d6" stroke-width="2.6" stroke-linecap="round"/><rect x="2895.3" y="202.3" width="19.5" height="8.5" fill="none" stroke="#ced0d6" stroke-width="2.6"/><path d="M2895,217.2 H2915.5" stroke="#ced0d6" stroke-width="2.6" stroke-linecap="round"/><path d="M2900,264 Q2902,279 2917.5,281 Q2902,283 2900,298 Q2898,283 2882.5,281 Q2898,279 2900,264Z" fill="#ced0d6"/><g transform="rotate(45 2898.5 359)"><rect x="2889.5" y="356.7" width="22" height="4.6" rx="1" fill="none" stroke="#ced0d6" stroke-width="2"/><path d="M2888,352.5 Q2881.5,353 2881.5,359 Q2881.5,365 2888,365.5 Q2892.5,365 2893,360.5 H2889 V357.5 H2893 Q2892.5,353 2888,352.5Z" fill="#ced0d6"/><path d="M2885,356 H2890 V362 H2885Z" fill="#2b2d30"/></g><g transform="rotate(-45 2899.5 360.5)"><rect x="2875" y="354" width="48" height="13" fill="none"/><rect x="2892" y="357.8" width="19" height="5.4" fill="#2b2d30"/><rect x="2877.3" y="357.3" width="15" height="6.4" rx="3" fill="none" stroke="#ced0d6" stroke-width="2.3"/><rect x="2892.3" y="358.8" width="18.5" height="3.4" fill="#ced0d6"/><rect x="2911" y="357.8" width="10" height="5.4" rx="1.5" fill="none" stroke="#ced0d6" stroke-width="2.2"/><path d="M2914,360.5 H2918" stroke="#ced0d6" stroke-width="1.4"/></g><path d="M2908.3,371 L2918,363.4" stroke="#4d86f0" stroke-width="2.4" stroke-linecap="butt"/><path d="M2918,371 L2911.4,374.3 L2918,378" fill="none" stroke="#4d86f0" stroke-width="2.4"/><path d="M2916.5,441.5 L2912,439 V429.20000000000005 H2903 Q2903,424.3 2898,424.3 Q2893,424.3 2893,429.20000000000005 H2883.5 V436.79999999999995 Q2889.3,438 2889.3,442 Q2889.3,446 2883.5,447.5 V457.4 H2909.5" fill="none" stroke="#ced0d6" stroke-width="2.6" stroke-linejoin="round"/><path d="M2897.5,442.5 L2903.3,448" stroke="#ced0d6" stroke-width="2.8" stroke-linecap="round"/><path d="M2893.2,437 Q2891.6,440.5 2894,443 Q2897,445 2899.5,442" fill="none" stroke="#ced0d6" stroke-width="2.6"/><path d="M2896,436 L2899.5,439" stroke="#ced0d6" stroke-width="2.6"/><path d="M2906,451 L2917,443" stroke="#4d86f0" stroke-width="2.4" stroke-linecap="butt"/><path d="M2917,451 L2910,454.5 L2917,458.5" fill="none" stroke="#4d86f0" stroke-width="2.4"/><path d="M2904,517 H2896 Q2884.5,517 2884.5,525 Q2884.5,533 2896,533 H2902" fill="none" stroke="#ced0d6" stroke-width="2.6" stroke-linecap="round"/><path d="M2896,517 H2906 Q2916.5,517 2916.5,524" fill="none" stroke="#ced0d6" stroke-width="2.6" stroke-linecap="round"/><path d="M2893,525 H2906" stroke="#ced0d6" stroke-width="2.6" stroke-linecap="round"/><path d="M2906,535 L2917,527" stroke="#4d86f0" stroke-width="2.4" stroke-linecap="butt"/><path d="M2917,535 L2910,538.5 L2917,542.5" fill="none" stroke="#4d86f0" stroke-width="2.4"/><path d="M2886.5,615 L2887,608 L2904,591 L2910.5,597.5 L2893.5,614.5 Z" fill="none" stroke="#ced0d6" stroke-width="2.6" stroke-linejoin="round"/><path d="M2907,588 L2910,585 L2916.5,591.5 L2913.5,594.5 Z" fill="#ced0d6"/><path d="M2904.4,609 L2914.8,601.6" stroke="#4d86f0" stroke-width="2.4" stroke-linecap="butt"/><path d="M2914.8,607 L2908.5,612 L2914.8,615.5" fill="none" stroke="#4d86f0" stroke-width="2.4"/><path d="M2884.3,672 V665.3 H2891 M2909,665.3 H2915.7 V672 M2884.3,690 V696.7 H2891" fill="none" stroke="#ced0d6" stroke-width="2.6" stroke-linecap="round" stroke-linejoin="round"/><circle cx="2901.3" cy="678" r="6" fill="none" stroke="#ced0d6" stroke-width="2.6"/><path d="M2896.8,682.5 L2891.7,688.5" stroke="#ced0d6" stroke-width="2.6" stroke-linecap="round"/><path d="M2908.5,691.6 L2917.7,684" stroke="#4d86f0" stroke-width="2.4" stroke-linecap="butt"/><path d="M2917.7,690 L2912,694 L2917.7,698" fill="none" stroke="#4d86f0" stroke-width="2.4"/><path d="M2893.05,788.52 A9.5,9.5 0 0 1 2906.95,788.52" fill="none" stroke="#a3a5aa" stroke-width="3.4"/><path d="M2886.47,782.38 A18.5,18.5 0 0 1 2913.53,782.38" fill="none" stroke="#a3a5aa" stroke-width="3.4"/><path d="M2880.62,776.93 A26.5,26.5 0 0 1 2919.38,776.93" fill="none" stroke="#a3a5aa" stroke-width="3.4"/><circle cx="2900" cy="795" r="3" fill="#a3a5aa"/><path d="M2891.5,877.7 H2887 Q2885.6,877.7 2885.6,876 V850 Q2885.6,848.3 2887.5,848.3 H2902.5 Q2904.4,848.3 2904.4,850 V859" fill="none" stroke="#ced0d6" stroke-width="2.6"/><path d="M2892,853 H2898" stroke="#ced0d6" stroke-width="2.6" stroke-linecap="round"/><circle cx="2908" cy="870.5" r="5.8" fill="none" stroke="#ced0d6" stroke-width="2.6"/><path d="M2912.5,875 L2918,880.5" stroke="#ced0d6" stroke-width="2.6" stroke-linecap="round"/></svg>
</body></html>
